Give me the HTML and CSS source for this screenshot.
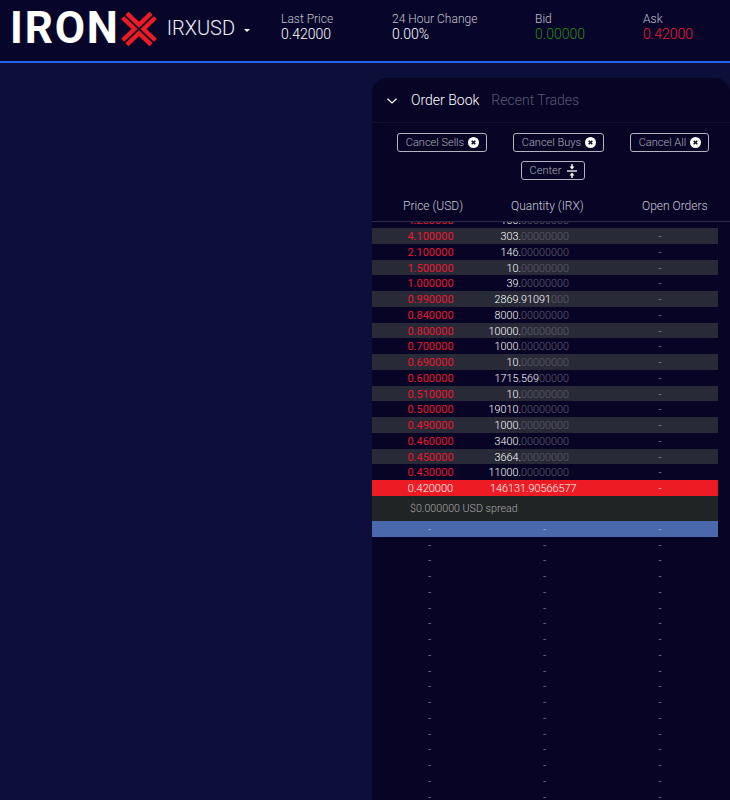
FILE: index.html
```html
<!DOCTYPE html>
<html lang="en">
<head>
<meta charset="utf-8">
<title>IRXUSD</title>
<link rel="stylesheet" href="styles.css">
</head>
<body>
<header class="topbar">
  <div class="brand">
    <span class="wordmark">IRON</span>
    <svg class="logo-x" viewBox="0 0 36 34" aria-hidden="true">
      <path stroke="#ed1c24" stroke-width="10.500" fill="none" d="M3.800 3.500 32.200 30.500M32.200 3.500 3.800 30.500"/>
      <path stroke="#07062a" stroke-width="1.700" fill="none" d="M0 0 36 34M36 0 0 34"/>
    </svg>
  </div>
  <div class="pair">IRXUSD<span class="caret"></span></div>
  <div class="stats">
    <div class="stat"><span class="stat-label">Last Price</span><span class="stat-value">0.42000</span></div>
    <div class="stat"><span class="stat-label">24 Hour Change</span><span class="stat-value">0.00%</span></div>
    <div class="stat"><span class="stat-label">Bid</span><span class="stat-value green">0.00000</span></div>
    <div class="stat"><span class="stat-label">Ask</span><span class="stat-value red">0.42000</span></div>
  </div>
</header>
<main class="page">
  <section class="panel">
    <div class="tabs">
      <svg class="chevron" viewBox="0 0 10 6" aria-hidden="true"><path d="M.5.700 5 5 9.500.7" fill="none" stroke="#fff" stroke-width="1.200"/></svg>
      <span class="tab active">Order Book</span>
      <span class="tab">Recent Trades</span>
    </div>
    <div class="actions">
      <div class="action-row">
        <button class="btn">Cancel Sells<svg class="ic" viewBox="0 0 12 12"><circle cx="6" cy="6" r="6" fill="#fff"/><path d="M4 4l4 4M8 4l-4 4" stroke="#07042a" stroke-width="1.600"/></svg></button>
        <button class="btn">Cancel Buys<svg class="ic" viewBox="0 0 12 12"><circle cx="6" cy="6" r="6" fill="#fff"/><path d="M4 4l4 4M8 4l-4 4" stroke="#07042a" stroke-width="1.600"/></svg></button>
        <button class="btn">Cancel All<svg class="ic" viewBox="0 0 12 12"><circle cx="6" cy="6" r="6" fill="#fff"/><path d="M4 4l4 4M8 4l-4 4" stroke="#07042a" stroke-width="1.600"/></svg></button>
      </div>
      <div class="action-row">
        <button class="btn">Center<svg class="ic-center" viewBox="0 0 10 14"><path d="M0 7h10" stroke="#fff" stroke-width="1.300"/><path d="M5 5.500 2.500 2.500H4.300V0H5.700V2.500H7.500ZM5 8.500 7.500 11.500H5.700V14H4.300V11.500H2.500Z" fill="#fff"/></svg></button>
      </div>
    </div>
    <div class="cols">
      <span>Price (USD)</span><span>Quantity (IRX)</span><span>Open Orders</span>
    </div>
    <div class="book">
      <div class="book-inner">
        <div class="row"><span class="price">4.200000</span><span class="qty">100.<i>00000000</i></span><span class="oo">-</span></div>
        <div class="row"><span class="price">4.100000</span><span class="qty">303.<i>00000000</i></span><span class="oo">-</span></div>
        <div class="row"><span class="price">2.100000</span><span class="qty">146.<i>00000000</i></span><span class="oo">-</span></div>
        <div class="row"><span class="price">1.500000</span><span class="qty">10.<i>00000000</i></span><span class="oo">-</span></div>
        <div class="row"><span class="price">1.000000</span><span class="qty">39.<i>00000000</i></span><span class="oo">-</span></div>
        <div class="row"><span class="price">0.990000</span><span class="qty">2869.91091<i>000</i></span><span class="oo">-</span></div>
        <div class="row"><span class="price">0.840000</span><span class="qty">8000.<i>00000000</i></span><span class="oo">-</span></div>
        <div class="row"><span class="price">0.800000</span><span class="qty">10000.<i>00000000</i></span><span class="oo">-</span></div>
        <div class="row"><span class="price">0.700000</span><span class="qty">1000.<i>00000000</i></span><span class="oo">-</span></div>
        <div class="row"><span class="price">0.690000</span><span class="qty">10.<i>00000000</i></span><span class="oo">-</span></div>
        <div class="row"><span class="price">0.600000</span><span class="qty">1715.569<i>00000</i></span><span class="oo">-</span></div>
        <div class="row"><span class="price">0.510000</span><span class="qty">10.<i>00000000</i></span><span class="oo">-</span></div>
        <div class="row"><span class="price">0.500000</span><span class="qty">19010.<i>00000000</i></span><span class="oo">-</span></div>
        <div class="row"><span class="price">0.490000</span><span class="qty">1000.<i>00000000</i></span><span class="oo">-</span></div>
        <div class="row"><span class="price">0.460000</span><span class="qty">3400.<i>00000000</i></span><span class="oo">-</span></div>
        <div class="row"><span class="price">0.450000</span><span class="qty">3664.<i>00000000</i></span><span class="oo">-</span></div>
        <div class="row"><span class="price">0.430000</span><span class="qty">11000.<i>00000000</i></span><span class="oo">-</span></div>
        <div class="row ask"><span class="price">0.420000</span><span class="qty">146131.90566577</span><span class="oo">-</span></div>
        <div class="spread">$0.000000 USD spread</div>
        <div class="row empty bid"><span>-</span><span>-</span><span>-</span></div>
        <div class="row empty"><span>-</span><span>-</span><span>-</span></div>
        <div class="row empty"><span>-</span><span>-</span><span>-</span></div>
        <div class="row empty"><span>-</span><span>-</span><span>-</span></div>
        <div class="row empty"><span>-</span><span>-</span><span>-</span></div>
        <div class="row empty"><span>-</span><span>-</span><span>-</span></div>
        <div class="row empty"><span>-</span><span>-</span><span>-</span></div>
        <div class="row empty"><span>-</span><span>-</span><span>-</span></div>
        <div class="row empty"><span>-</span><span>-</span><span>-</span></div>
        <div class="row empty"><span>-</span><span>-</span><span>-</span></div>
        <div class="row empty"><span>-</span><span>-</span><span>-</span></div>
        <div class="row empty"><span>-</span><span>-</span><span>-</span></div>
        <div class="row empty"><span>-</span><span>-</span><span>-</span></div>
        <div class="row empty"><span>-</span><span>-</span><span>-</span></div>
        <div class="row empty"><span>-</span><span>-</span><span>-</span></div>
        <div class="row empty"><span>-</span><span>-</span><span>-</span></div>
        <div class="row empty"><span>-</span><span>-</span><span>-</span></div>
        <div class="row empty"><span>-</span><span>-</span><span>-</span></div>
      </div>
    </div>
  </section>
</main>
</body>
</html>
```
FILE: styles.css
```css
* { box-sizing: border-box; }
html, body { margin: 0; height: 100%; }
body {
  width: 730px;
  height: 800px;
  overflow: hidden;
  background: #0b0f3a;
  color: #fff;
  font-family: Roboto, "Liberation Sans", sans-serif;
  font-weight: 300;
  display: flex;
  flex-direction: column;
}
.topbar {
  height: 63px;
  flex: none;
  background: #07062a;
  border-bottom: 2px solid #2563eb;
  display: flex;
  align-items: flex-start;
  padding-left: 10px;
}
.brand { display: flex; align-items: center; height: 57px; }
.wordmark {
  font-size: 44px;
  line-height: 57px;
  font-weight: 700;
  letter-spacing: 1.800px;
  color: #fff;
}
.logo-x { width: 36px; height: 34px; margin-left: 1px; }
.pair {
  font-size: 20px;
  line-height: 57px;
  margin-left: 10px;
  display: flex;
  align-items: center;
  color: #f0f0f5;
}
.caret {
  width: 0; height: 0;
  margin-left: 9px;
  margin-top: 3px;
  border-left: 3.500px solid transparent;
  border-right: 3.500px solid transparent;
  border-top: 3.500px solid #fff;
}
.stats {
  margin-left: 31px;
  display: grid;
  grid-template-columns: 111px 143px 108px 1fr;
  flex: 1;
  padding-top: 12px;
}
.stat { display: flex; flex-direction: column; }
.stat-label { font-size: 12px; line-height: 15px; color: #c3c3cb; }
.stat-value { font-size: 14px; line-height: 15px; color: #fff; }
.green { color: #2f8a10; }
.red { color: #ed1c34; }

.page { flex: 1; display: flex; justify-content: flex-end; padding-top: 15px; min-height: 0; }
.panel {
  width: 358px;
  background: #070425;
  border-radius: 15px 15px 0 0;
  display: flex;
  flex-direction: column;
  min-height: 0;
}
.tabs {
  height: 45px;
  flex: none;
  display: flex;
  align-items: center;
  padding-left: 15px;
  border-bottom: 1px solid #131130;
}
.chevron { width: 10px; height: 6px; margin-right: 14px; margin-top: 2px; }
.tab { font-size: 14px; color: #5a5a72; margin-right: 12px; }
.tab.active { color: #fff; }
.actions {
  flex: none;
  display: flex;
  flex-direction: column;
  row-gap: 9px;
  padding: 10px 8px 0 12px;
}
.action-row { display: flex; justify-content: space-around; }
.btn {
  height: 19px;
  padding: 0 7px 0 8px;
  background: transparent;
  border: 1px solid #b4b4c0;
  border-radius: 3px;
  color: #b0b0bb;
  font-family: inherit;
  font-weight: 300;
  font-size: 11px;
  display: inline-flex;
  align-items: center;
  gap: 4px;
}
.ic { width: 11px; height: 11px; }
.ic-center { width: 10px; height: 14px; margin-left: 2px; }
.cols {
  flex: none;
  margin-top: 18px;
  height: 24px;
  padding-left: 31px;
  display: grid;
  grid-template-columns: 108px 131px 1fr;
  font-size: 12px;
  line-height: 17px;
  color: #c9cad6;
  border-bottom: 1px solid #2c2b4b;
}
.book { flex: 1; overflow: hidden; min-height: 0; }
.book-inner { margin-top: -9.750px; width: 346px; }
.row {
  height: 15.750px;
  display: grid;
  grid-template-columns: 115px 115px 116px;
  font-size: 11px;
  line-height: 17.500px;
  text-align: center;
}
.row:nth-child(even) { background: #282a38; }
.row.empty, .row.empty:nth-child(even) { background: transparent; color: #a2a2b0; }
.price { color: #e8192f; padding-left: 2px; font-weight: 400; }
.qty { text-align: right; padding-right: 33px; color: #fff; font-size: 10.800px; }
.qty i { font-style: normal; color: #60606c; }
.oo { color: #a2a2b0; }
.row.ask, .row.ask:nth-child(even) { background: #ed1c24; }
.row.ask .price, .row.ask .qty, .row.ask .oo { color: #fff; font-weight: 300; }
.row.ask .qty { text-align: left; padding: 0 0 0 3px; }
.spread {
  height: 25px;
  background: #212425;
  color: #a9a9ae;
  font-size: 10.700px;
  line-height: 25px;
  padding-left: 38px;
}
.row.bid, .row.bid:nth-child(even) { background: #4a69ad; color: #b8c4e0; }
```
